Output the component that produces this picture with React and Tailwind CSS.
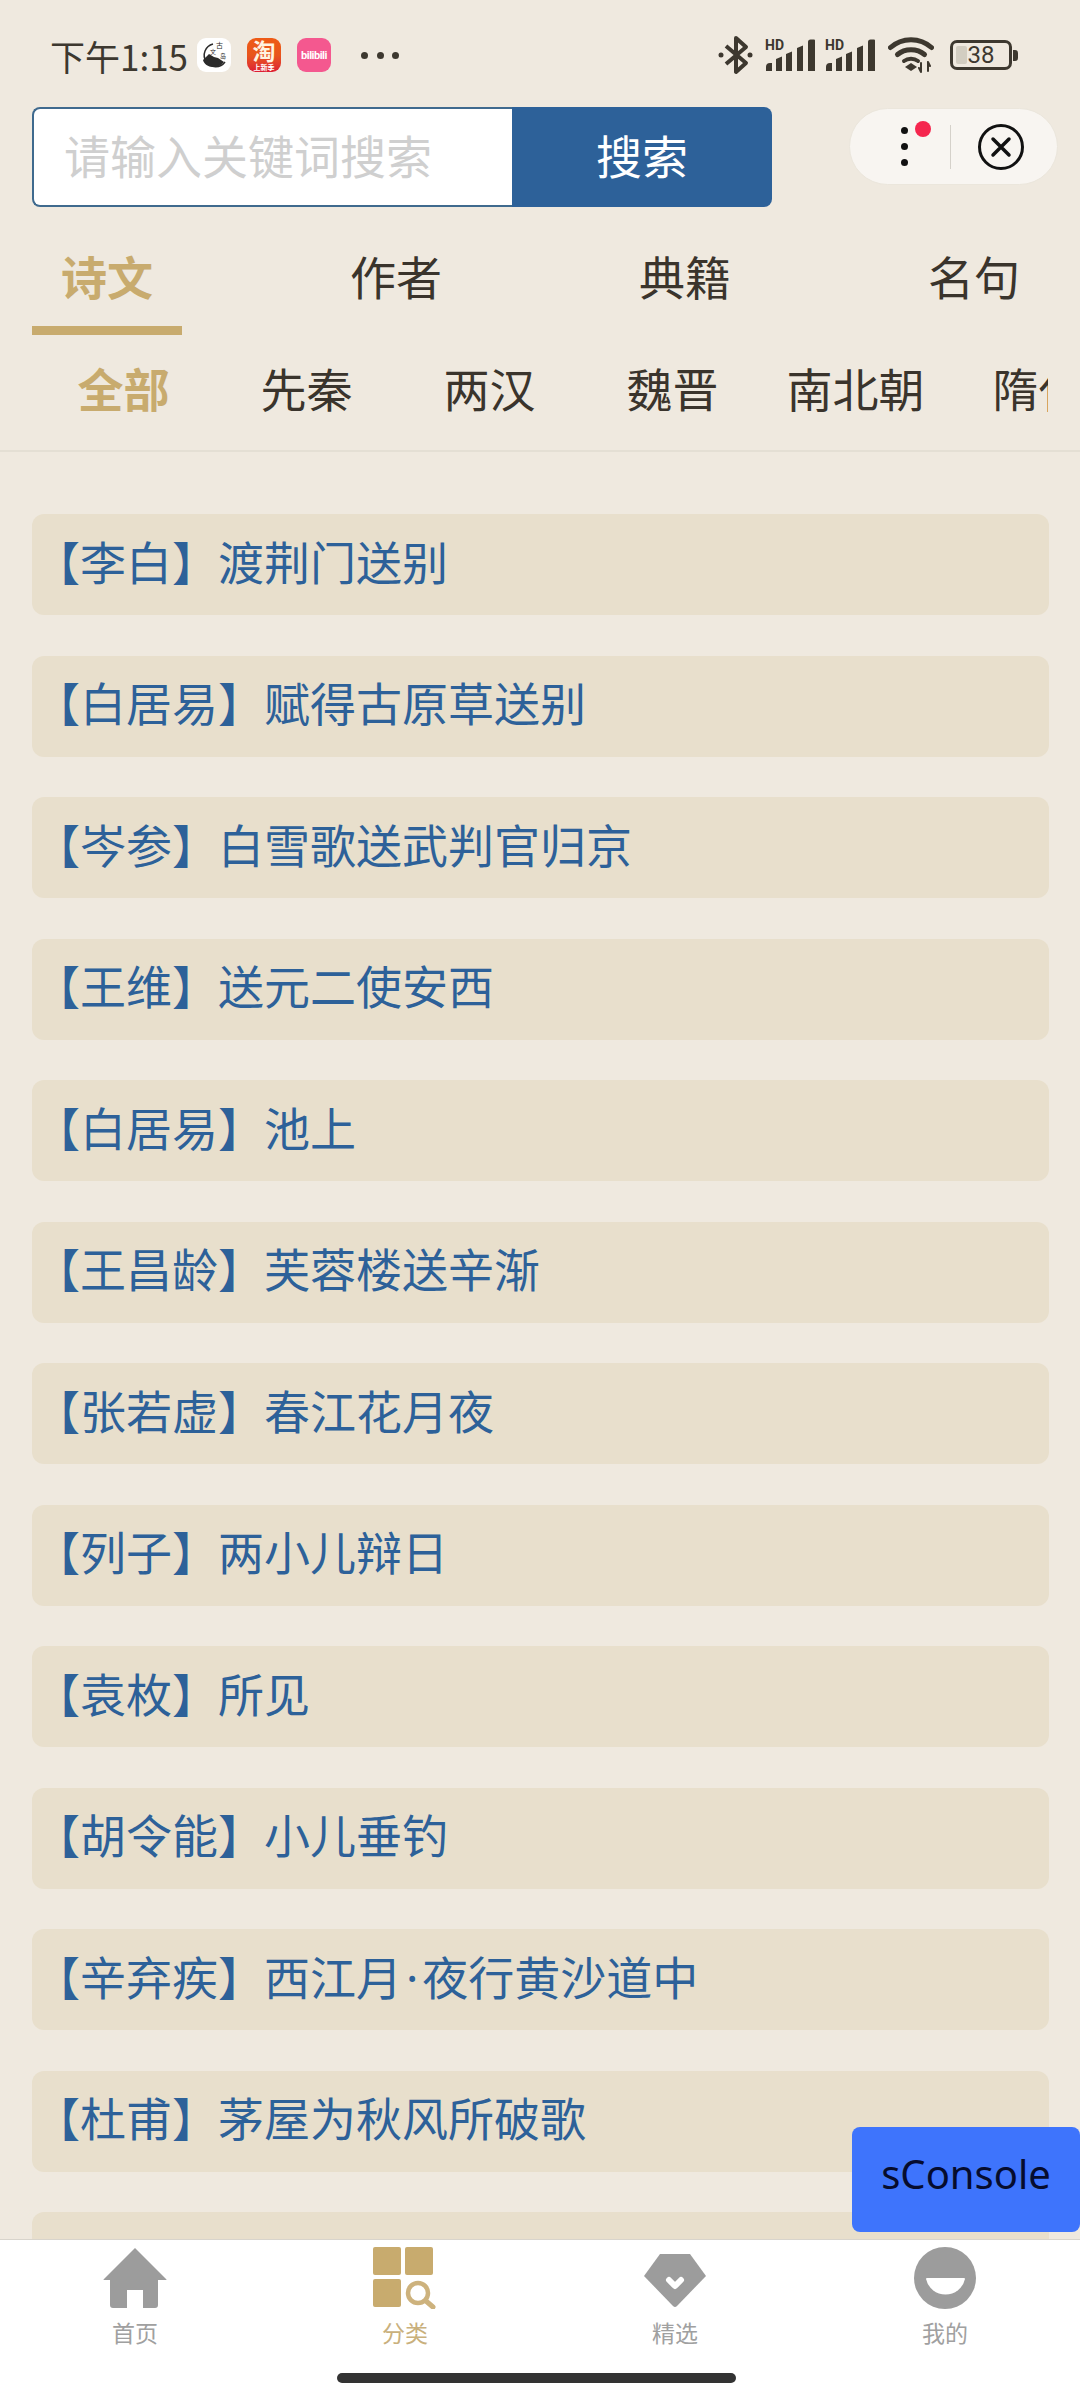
const FONT = { fontFamily: '"Noto Sans CJK SC", "Noto Sans", sans-serif' }

const TABS = ['诗文', '作者', '典籍', '名句']
const DYNASTIES = ['全部', '先秦', '两汉', '魏晋', '南北朝', '隋代']
const POEMS = [
  ['李白', '渡荆门送别'],
  ['白居易', '赋得古原草送别'],
  ['岑参', '白雪歌送武判官归京'],
  ['王维', '送元二使安西'],
  ['白居易', '池上'],
  ['王昌龄', '芙蓉楼送辛渐'],
  ['张若虚', '春江花月夜'],
  ['列子', '两小儿辩日'],
  ['袁枚', '所见'],
  ['胡令能', '小儿垂钓'],
  ['辛弃疾', '西江月', '夜行黄沙道中'],
  ['杜甫', '茅屋为秋风所破歌'],
  ['', ''],
]

function Signal() {
  return (
    <svg width="50" height="32" viewBox="0 0 50 32" className="shrink-0 overflow-visible">
      <text x="0" y="11" fontSize="14" fontWeight="700" fill="#3d382f" fontFamily="Roboto, sans-serif">HD</text>
      <path d="M1 32v-4a4 4 0 0 1 4-4h2v8z M11 32V20l6-2.500V32z M21 32V15l6-2.500V32z M32 32V9l6-2.500V32z M43 32V3a2.500 2.500 0 0 1 2.500-2.500H49a1 1 0 0 1 1 1V32z" fill="#3d382f" />
    </svg>
  )
}

function StatusBar() {
  return (
    <div className="h-[107px] flex items-center pt-[3px] pl-[50px] text-[#3d382f] shrink-0">
      <span className="text-[35px] leading-none w-[147px] whitespace-nowrap">下午1:15</span>

      <div className="w-[34px] h-[34px] rounded-[9px] bg-white shrink-0">
        <svg viewBox="0 0 34 34" className="w-full h-full">
          <path d="M16 6a11.500 11.500 0 1 0 12 18" fill="none" stroke="#2b2b2b" strokeWidth="1.500" />
          <path d="M6 22l6-6 5 3 4 1 6 4c-3 4-7 5-11 5-5 0-9-3-10-7z" fill="#2b2b2b" />
          <text x="19" y="10" fontSize="7" fill="#2b2b2b">古</text>
          <text x="13" y="16" fontSize="6" fill="#2b2b2b">文</text>
          <text x="23" y="20" fontSize="6" fill="#2b2b2b">岛</text>
        </svg>
      </div>

      <div className="w-[34px] h-[34px] ml-[16px] rounded-[9px] overflow-hidden flex flex-col items-center bg-linear-to-b from-[#ee5b15] via-[#e8551c] to-[#dd1b33] shrink-0">
        <span className="text-[23px] h-[25px] leading-[25px] text-[#fff3e0] font-bold">淘</span>
        <span className="text-[7px] h-[9px] leading-[9px] text-white font-bold whitespace-nowrap">上新季</span>
      </div>

      <div className="w-[34px] h-[34px] ml-[16px] rounded-[9px] flex items-center justify-center bg-[#f4588f] shrink-0">
        <span className="text-[11px] leading-none text-white font-bold tracking-[-0.5px] font-['Roboto',sans-serif]">bilibili</span>
      </div>

      <div className="ml-[30px] flex gap-[8.500px]">
        <span className="w-[7px] h-[7px] rounded-full bg-[#3d382f]" />
        <span className="w-[7px] h-[7px] rounded-full bg-[#3d382f]" />
        <span className="w-[7px] h-[7px] rounded-full bg-[#3d382f]" />
      </div>

      <div className="ml-[319px] flex items-center">
        <svg width="35" height="40" viewBox="0 0 35 40" fill="none" stroke="#3d382f" strokeWidth="4" strokeLinejoin="round">
          <path d="M8 11l20 17-10 9V3l10 9-20 17" />
          <circle cx="3" cy="20" r="2.500" fill="#3d382f" stroke="none" />
          <circle cx="32" cy="20" r="2.500" fill="#3d382f" stroke="none" />
        </svg>
        <div className="ml-[12px]"><Signal /></div>
        <div className="ml-[10px]"><Signal /></div>
        <svg width="46" height="36" viewBox="0 0 46 36" className="ml-[13px]" fill="none" stroke="#3d382f" strokeWidth="5" strokeLinecap="round">
          <path d="M2.500 10.500C14 0 32 0 43.500 10.500" />
          <path d="M9.500 17.500C17 11 29 11 36.500 17.500" />
          <path d="M16 24c4-3 10-3 14 0" strokeWidth="4" />
          <path d="M17 30l6-4 6 4-6 4z" fill="#3d382f" stroke="none" />
          <path d="M33 26v9 M31 31l2 4 M40 25v9 M40 25l2 4" strokeWidth="2" />
        </svg>
        <div className="ml-[16px] w-[62px] h-[30px] rounded-[7px] border-[3px] border-[#3d382f] relative flex items-center justify-center">
          <div className="absolute left-[3px] top-[3px] bottom-[3px] w-[11px] bg-[#d2cdc1] rounded-[2px]" />
          <span className="relative text-[24px] leading-none font-['Roboto',sans-serif]">38</span>
        </div>
        <div className="ml-[1px] w-[5px] h-[11px] rounded-r-[3px] bg-[#3d382f]" />
      </div>
    </div>
  )
}

function SearchRow() {
  return (
    <div className="h-[100px] flex pl-[32px] shrink-0">
      <div className="w-[480px] h-full bg-white border-2 border-r-0 border-[#3f6a8e] rounded-l-[8px] flex items-center pl-[30px] pb-[6px]">
        <span className="text-[46px] leading-none text-[#cfcfcf]">请输入关键词搜索</span>
      </div>
      <div className="w-[260px] h-full bg-[#2d6199] rounded-r-[8px] flex items-center justify-center pb-[6px]">
        <span className="text-[46px] leading-none text-white">搜索</span>
      </div>

      <div className="ml-[77px] w-[209px] h-[77px] mt-[1px] rounded-full bg-[#f8f5f1] border border-[#ebe6dc] flex items-center relative">
        <div className="ml-[51px] flex flex-col gap-[9px]">
          <span className="w-[7px] h-[7px] rounded-full bg-[#111]" />
          <span className="w-[7px] h-[7px] rounded-full bg-[#111]" />
          <span className="w-[7px] h-[7px] rounded-full bg-[#111]" />
        </div>
        <span className="absolute left-[65px] top-[12px] w-[16px] h-[16px] rounded-full bg-[#f5264e]" />
        <span className="ml-[42px] w-px h-[44px] bg-[#d5d1ca]" />
        <svg width="48" height="48" viewBox="0 0 48 48" className="ml-[26px]" fill="none" stroke="#111" strokeLinecap="round">
          <circle cx="24" cy="24" r="21.500" strokeWidth="3" />
          <path d="M16 16l16 16M32 16L16 32" strokeWidth="3.500" />
        </svg>
      </div>
    </div>
  )
}

function NavItem({ label, active, children }) {
  return (
    <div className="flex flex-col items-center">
      <div className="h-[62px] flex items-center justify-center">{children}</div>
      <span className={`mt-[11px] text-[23px] leading-[24px] ${active ? 'text-[#c9b07c]' : 'text-[#a0a0a0]'}`}>{label}</span>
    </div>
  )
}

export default function App() {
  return (
    <div className="w-[1080px] h-[2400px] bg-[#efe9df] flex flex-col overflow-hidden relative" style={FONT}>
      <StatusBar />
      <SearchRow />

      <div className="flex justify-between pl-[32px] pr-[31px] shrink-0">
        {TABS.map((t, i) => (
          <div key={t} className="w-[150px] pt-[46px] flex flex-col items-center">
            <span className={`text-[46px] leading-[44px] ${i === 0 ? 'text-[#c8ab6e] font-bold' : 'text-[#3a342c]'}`}>{t}</span>
            <div className={`mt-[29px] w-full h-[9px] ${i === 0 ? 'bg-[#c8ab6e]' : ''}`} />
          </div>
        ))}
      </div>

      <div className="border-b-2 border-[#e4dfd4] pl-[32px] pr-[32px] shrink-0">
        <div className="flex overflow-hidden pt-[30px] pb-[41px]">
          {DYNASTIES.map((d, i) => (
            <span key={d} className={`w-[183px] shrink-0 text-center whitespace-nowrap text-[46px] leading-[44px] ${i === 0 ? 'text-[#c8ab6e] font-bold' : 'text-[#3a342c]'}`}>{d}</span>
          ))}
        </div>
      </div>

      <div className="flex-1 min-h-0 overflow-hidden pt-[62px] pl-[32px] pr-[31px] flex flex-col gap-[40.500px]">
        {POEMS.map(([author, title, rest], i) => (
          <div key={i} className="h-[101px] shrink-0 rounded-[12px] bg-[#e8dfcc] flex items-center pl-[2px] pb-[6px]">
            {author && (
              <span className="text-[46px] leading-none text-[#2d6199] whitespace-nowrap font-['Noto_Sans','Noto_Sans_CJK_SC',sans-serif]">
                【{author}】{title}
                {rest && <span className="mx-[4px]">·</span>}
                {rest}
              </span>
            )}
          </div>
        ))}
      </div>

      <div className="h-[161px] shrink-0 bg-white border-t border-[#d8d4cc] flex flex-col">
        <div className="w-full grid grid-cols-4 pt-[7px]">
          <NavItem label="首页">
            <svg width="64" height="60" viewBox="0 0 64 60" fill="#9c9c9c">
              <path d="M32 0L63.500 31.500a.5.5 0 0 1-.5.5H55V57a3 3 0 0 1-3 3H40V42H24V60H10a3 3 0 0 1-3-3V32H1a.5.5 0 0 1-.5-.5z" />
            </svg>
          </NavItem>
          <NavItem label="分类" active>
            <svg width="64" height="62" viewBox="0 0 64 62">
              <rect x="0" y="0" width="28" height="28" rx="2" fill="#c8ab6e" />
              <rect x="32" y="0" width="28" height="28" rx="2" fill="#c8ab6e" />
              <rect x="0" y="32" width="28" height="28" rx="2" fill="#c8ab6e" />
              <circle cx="45" cy="46" r="10" fill="none" stroke="#cdb27d" strokeWidth="4.500" />
              <path d="M53 54l7 6" stroke="#cdb27d" strokeWidth="5" strokeLinecap="round" />
            </svg>
          </NavItem>
          <NavItem label="精选">
            <svg width="62" height="54" viewBox="0 0 62 54" className="mt-[6px]">
              <path d="M16 0H46L62 22 33 52a3 3 0 0 1-4 0L0 22z" fill="#9c9c9c" />
              <path d="M25 26l6 6 6-6" fill="none" stroke="#fff" strokeWidth="6" strokeLinecap="round" strokeLinejoin="round" />
            </svg>
          </NavItem>
          <NavItem label="我的">
            <svg width="62" height="62" viewBox="0 0 62 62">
              <circle cx="31" cy="31" r="31" fill="#9c9c9c" />
              <path d="M13 31H50a1 1 0 0 1 1 1A20 20 0 0 1 12 32a1 1 0 0 1 1-1z" fill="#fff" />
            </svg>
          </NavItem>
        </div>
        <div className="mt-[29px] ml-[337px] w-[399px] h-[10px] rounded-full bg-[#333]" />
      </div>

      <div className="absolute left-[852px] top-[2127px] w-[228px] h-[105px] rounded-[8px] bg-[#3e74fc] flex items-center justify-center pb-[12px]">
        <span className="text-[40px] leading-none text-[#060c2e] font-['Noto_Sans',sans-serif]">sConsole</span>
      </div>
    </div>
  )
}
